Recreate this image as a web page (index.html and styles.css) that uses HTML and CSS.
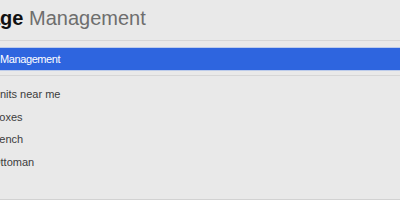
FILE: index.html
```html
<!DOCTYPE html>
<html lang="en">
<head>
    <meta charset="UTF-8">
    <meta name="viewport" content="width=device-width, initial-scale=1.0">
    <title>Storage Management</title>
    <link rel="stylesheet" href="styles.css">
</head>
<body>
    <div class="window">
        <div class="panel">
            <h1 class="title"><strong>Storage</strong> Management</h1>

            <div class="selected">Management</div>

            <ul class="list">
                <li>Units near me</li>
                <li>Boxes</li>
                <li>Bench</li>
                <li>Ottoman</li>
            </ul>
        </div>
    </div>
</body>
</html>
```

FILE: styles.css
```css
* {
    margin: 0;
    padding: 0;
    box-sizing: border-box;
    font-family: 'Liberation Sans', Arial, sans-serif;
}

body {
    background-color: #e9e9e9;
    overflow: hidden;
}

.window {
    height: 200px;
    border-bottom: 1px solid #d2d2d2;
    overflow: hidden;
}

.panel {
    margin-left: -60px;
}

.title {
    height: 41px;
    padding: 6px 0 0 9px;
    font-size: 20px;
    line-height: 24px;
    font-weight: normal;
    color: #6e6e6e;
    border-bottom: 1px solid #d6d6d6;
    white-space: nowrap;
}

.title strong {
    color: #111;
    font-weight: bold;
}

.selected {
    margin-top: 6px;
    height: 24px;
    padding-left: 60px;
    background: #2e65df;
    border-top: 1px solid #bccbea;
    border-bottom: 1px solid #bccbea;
    color: white;
    font-size: 11px;
    letter-spacing: -0.4px;
    line-height: 22px;
}

.list {
    list-style: none;
    margin-top: 4px;
    padding: 7px 0 0 52px;
    border-top: 1px solid #d6d6d6;
}

.list li {
    height: 22.7px;
    line-height: 23px;
    font-size: 11px;
    color: #3c3c3c;
}
```
